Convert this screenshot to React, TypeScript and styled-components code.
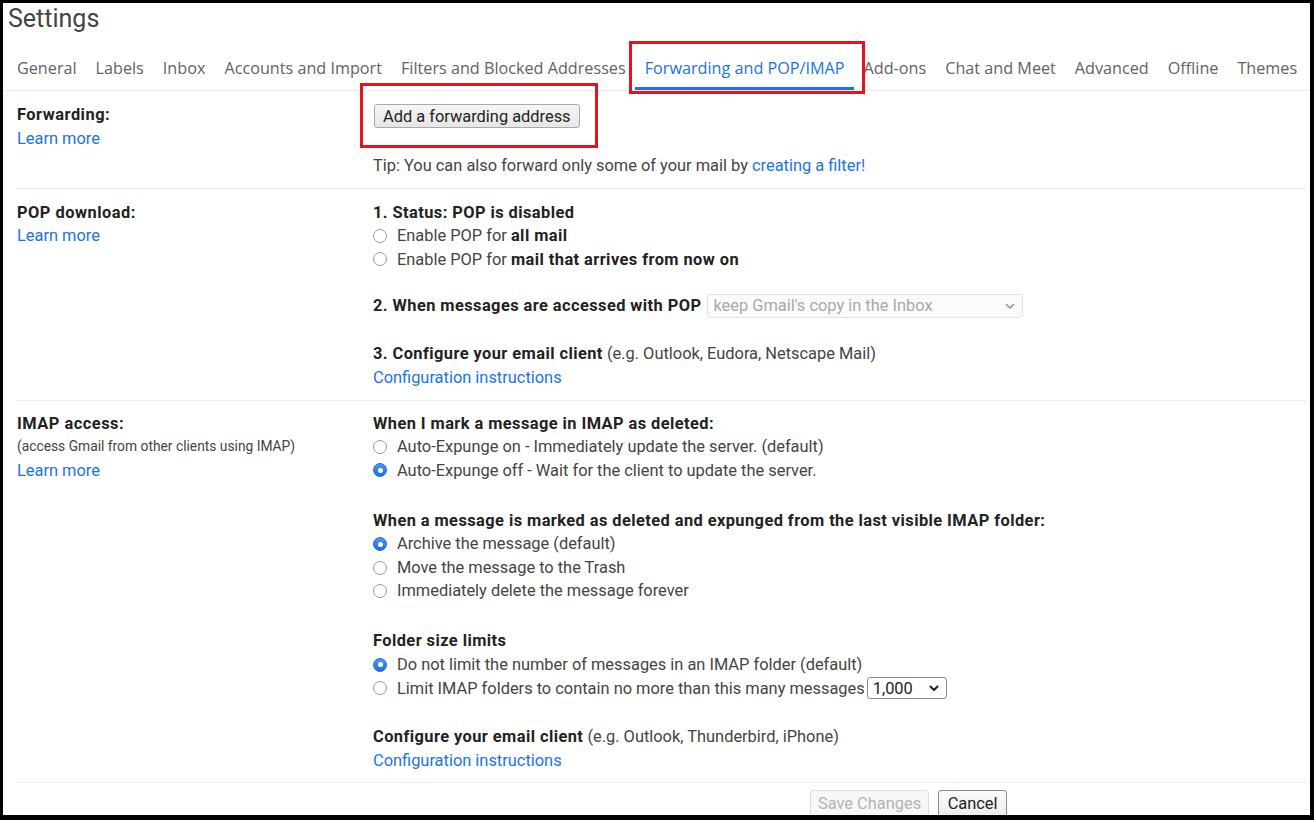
import React from "react";
import styled, { createGlobalStyle } from "styled-components";

const GlobalStyle = createGlobalStyle`
  html, body { margin: 0; padding: 0; background: #000; overflow: hidden; }
  * { box-sizing: border-box; }
`;

const Frame = styled.div`
  position: relative;
  margin: 3px 4px 0 3px;
  height: 812px;
  background: #fff;
  overflow: hidden;
  font-family: Roboto, "Liberation Sans", Arial, sans-serif;
  font-size: 16.4px;
  color: #333;
`;

const Title = styled.h1`
  margin: 0;
  padding: 1px 0 0 5px;
  height: 40px;
  font-size: 25px;
  font-weight: 400;
  color: #444;
  line-height: 30px;
`;

const TabBar = styled.nav`
  display: flex;
  padding: 14px 0 0 4.5px;
  border-bottom: 1px solid #ececec;
`;

const Tab = styled.div<{ $active?: boolean }>`
  padding: 0 9.5px;
  height: 33px;
  line-height: 22px;
  font-family: "Open Sans", Roboto, sans-serif;
  font-size: 16.2px;
  white-space: nowrap;
  color: ${(p) => (p.$active ? "#1a73e8" : "#5f6368")};
  font-weight: ${(p) => (p.$active ? 500 : 400)};
  border-bottom: 3px solid ${(p) => (p.$active ? "#1a73e8" : "transparent")};
`;

const Section = styled.section<{ $pt: number; $pb: number }>`
  display: grid;
  grid-template-columns: 356px 1fr;
  margin: 0 4px 0 13px;
  padding: ${(p) => p.$pt}px 0 ${(p) => p.$pb}px 1px;
  border-bottom: 1px solid #ececec;
  line-height: 23.5px;
`;

const LabelCol = styled.div`
  display: flex;
  flex-direction: column;
`;

const Label = styled.div`
  font-weight: 700;
  color: #222;
  letter-spacing: 0.5px;
`;

const SubNote = styled.div`
  font-size: 13.8px;
  color: #444;
`;

const Link = styled.a`
  color: #1a73e8;
  text-decoration: none;
  cursor: pointer;
`;

const Content = styled.div`
  display: flex;
  flex-direction: column;
`;

const Group = styled.div<{ $mt?: number }>`
  display: flex;
  flex-direction: column;
  margin-top: ${(p) => p.$mt ?? 0}px;
`;

const Heading = styled.div`
  font-weight: 700;
  color: #222;
  letter-spacing: 0.43px;
`;

const Line = styled.div`
  display: flex;
  align-items: center;
  color: #444;
  white-space: nowrap;
`;

const Strong = styled.b`
  font-weight: 700;
  color: #222;
  letter-spacing: 0.43px;
`;

const Muted = styled.span`
  font-weight: 400;
  color: #444;
`;

const Radio = styled.span<{ $checked?: boolean }>`
  display: inline-block;
  flex: none;
  width: 14px;
  height: 14px;
  margin: 0 10px 0 0;
  border-radius: 50%;
  position: relative;
  border: 1px solid ${(p) => (p.$checked ? "#1a6fe0" : "#9a9a9a")};
  background: ${(p) =>
    p.$checked ? "linear-gradient(#4a97f5, #1a6fe0)" : "#fff"};
  &::after {
    content: "";
    display: ${(p) => (p.$checked ? "block" : "none")};
    position: absolute;
    left: 50%;
    top: 50%;
    width: 5px;
    height: 5px;
    margin: -2.5px 0 0 -2.5px;
    border-radius: 50%;
    background: #fff;
  }
`;

const GrayButton = styled.button`
  display: inline-flex;
  align-items: center;
  height: 24px;
  padding: 0 8px;
  margin: 1px 0 0 1px;
  align-self: flex-start;
  font-family: inherit;
  font-size: 16.4px;
  color: #222;
  background: linear-gradient(#f6f6f6, #e6e6e6);
  border: 1px solid #a9a9a9;
  border-radius: 3px;
`;

const Tip = styled.div`
  margin-top: 26px;
  color: #444;
`;

const SelectBox = styled.div<{ $disabled?: boolean; $w: number; $h: number; $ml: number }>`
  display: inline-flex;
  align-items: center;
  justify-content: space-between;
  width: ${(p) => p.$w}px;
  height: ${(p) => p.$h}px;
  margin-left: ${(p) => p.$ml}px;
  padding: 0 7px 0 5px;
  border: 1px solid ${(p) => (p.$disabled ? "#e2e2e2" : "#8a8a8a")};
  border-radius: 3px;
  background: ${(p) => (p.$disabled ? "#fbfbfb" : "#fff")};
  color: ${(p) => (p.$disabled ? "#a9a9a9" : "#222")};
  font-size: 16.4px;
`;

const SelectLine = styled(Line)`
  height: 24px;
`;

const Footer = styled.div`
  display: flex;
  gap: 9px;
  padding: 7px 0 0 807px;
`;

const FooterButton = styled.button<{ $disabled?: boolean }>`
  height: 27px;
  padding: 0 ${(p) => (p.$disabled ? 7 : 8.5)}px;
  font-family: inherit;
  font-size: 16.4px;
  border-radius: 3px;
  color: ${(p) => (p.$disabled ? "#b4b4b4" : "#222")};
  background: ${(p) => (p.$disabled ? "#f7f7f7" : "linear-gradient(#fafafa, #eeeeee)")};
  border: 1px solid ${(p) => (p.$disabled ? "#dedede" : "#8c8c8c")};
`;

const Annotation = styled.div<{ $l: number; $t: number; $w: number; $h: number }>`
  position: absolute;
  left: ${(p) => p.$l}px;
  top: ${(p) => p.$t}px;
  width: ${(p) => p.$w}px;
  height: ${(p) => p.$h}px;
  border: 3px solid #e3141b;
  pointer-events: none;
`;

const Chevron = ({ color, bold }: { color: string; bold?: boolean }) => (
  <svg width="10" height="7" viewBox="0 0 10 7">
    <path
      d="M1.5 1.5 L5 5 L8.5 1.5"
      fill="none"
      stroke={color}
      strokeWidth={bold ? 2 : 1.3}
      strokeLinecap="round"
      strokeLinejoin="round"
    />
  </svg>
);

const tabs = [
  "General",
  "Labels",
  "Inbox",
  "Accounts and Import",
  "Filters and Blocked Addresses",
  "Forwarding and POP/IMAP",
  "Add-ons",
  "Chat and Meet",
  "Advanced",
  "Offline",
  "Themes",
];

export default function App() {
  return (
    <>
      <GlobalStyle />
      <Frame>
        <Title>Settings</Title>
        <TabBar>
          {tabs.map((t) => (
            <Tab key={t} $active={t === "Forwarding and POP/IMAP"}>
              {t}
            </Tab>
          ))}
        </TabBar>

        <Section $pt={12} $pb={10}>
          <LabelCol>
            <Label>Forwarding:</Label>
            <Link>Learn more</Link>
          </LabelCol>
          <Content>
            <GrayButton>Add a forwarding address</GrayButton>
            <Tip>
              Tip: You can also forward only some of your mail by{" "}
              <Link>creating a filter!</Link>
            </Tip>
          </Content>
        </Section>

        <Section $pt={12} $pb={10.5}>
          <LabelCol>
            <Label>POP download:</Label>
            <Link>Learn more</Link>
          </LabelCol>
          <Content>
            <Group>
              <Heading>1. Status: POP is disabled</Heading>
              <Line>
                <Radio />
                Enable POP for&nbsp;<Strong>all mail</Strong>
              </Line>
              <Line>
                <Radio />
                Enable POP for&nbsp;<Strong>mail that arrives from now on</Strong>
              </Line>
            </Group>
            <Group $mt={23}>
              <SelectLine>
                <Strong>2. When messages are accessed with POP</Strong>
                <SelectBox $disabled $w={316} $h={24} $ml={6}>
                  keep Gmail's copy in the Inbox
                  <Chevron color="#8a8a8a" />
                </SelectBox>
              </SelectLine>
            </Group>
            <Group $mt={24}>
              <Line>
                <Strong>3. Configure your email client</Strong>&nbsp;
                <Muted>(e.g. Outlook, Eudora, Netscape Mail)</Muted>
              </Line>
              <Link>Configuration instructions</Link>
            </Group>
          </Content>
        </Section>

        <Section $pt={11} $pb={9.5}>
          <LabelCol>
            <Label>IMAP access:</Label>
            <SubNote>(access Gmail from other clients using IMAP)</SubNote>
            <Link>Learn more</Link>
          </LabelCol>
          <Content>
            <Group>
              <Heading>When I mark a message in IMAP as deleted:</Heading>
              <Line>
                <Radio />
                Auto-Expunge on - Immediately update the server. (default)
              </Line>
              <Line>
                <Radio $checked />
                Auto-Expunge off - Wait for the client to update the server.
              </Line>
            </Group>
            <Group $mt={26.75}>
              <Heading>
                When a message is marked as deleted and expunged from the last visible IMAP folder:
              </Heading>
              <Line>
                <Radio $checked />
                Archive the message (default)
              </Line>
              <Line>
                <Radio />
                Move the message to the Trash
              </Line>
              <Line>
                <Radio />
                Immediately delete the message forever
              </Line>
            </Group>
            <Group $mt={26.5}>
              <Heading>Folder size limits</Heading>
              <Line>
                <Radio $checked />
                Do not limit the number of messages in an IMAP folder (default)
              </Line>
              <SelectLine>
                <Radio />
                Limit IMAP folders to contain no more than this many messages
                <SelectBox $w={80} $h={22} $ml={2}>
                  1,000
                  <Chevron color="#222" bold />
                </SelectBox>
              </SelectLine>
            </Group>
            <Group $mt={25}>
              <Line>
                <Strong>Configure your email client</Strong>&nbsp;
                <Muted>(e.g. Outlook, Thunderbird, iPhone)</Muted>
              </Line>
              <Link>Configuration instructions</Link>
            </Group>
          </Content>
        </Section>

        <Footer>
          <FooterButton $disabled>Save Changes</FooterButton>
          <FooterButton>Cancel</FooterButton>
        </Footer>

        <Annotation $l={626} $t={38} $w={236} $h={53} />
        <Annotation $l={357} $t={80} $w={238} $h={65} />
      </Frame>
    </>
  );
}
